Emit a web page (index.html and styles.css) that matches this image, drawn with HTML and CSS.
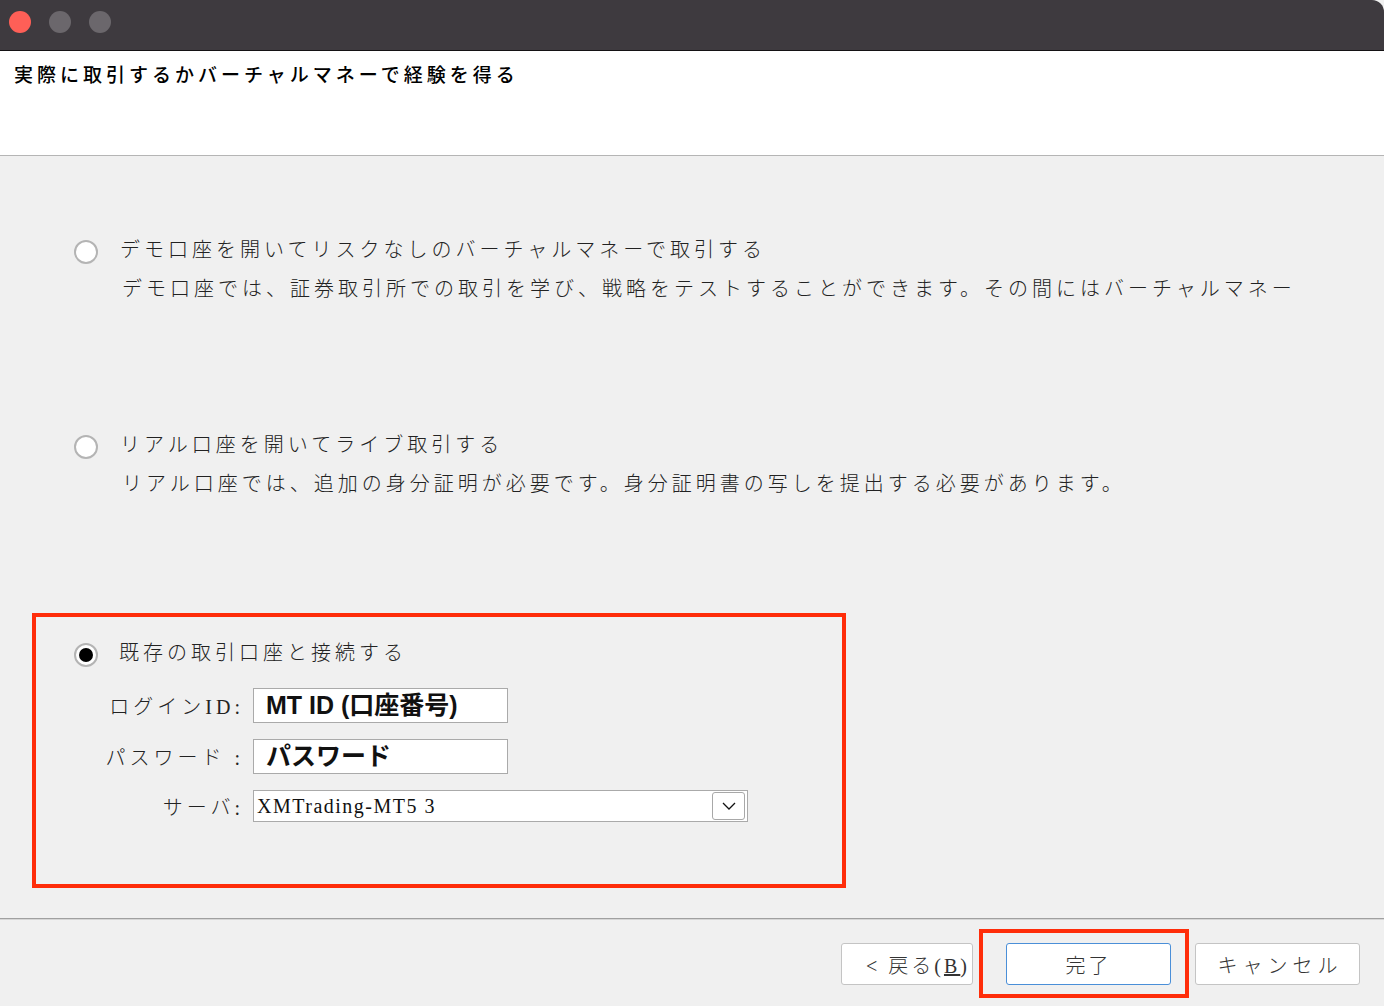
FILE: index.html
```html
<!DOCTYPE html>
<html lang="ja">
<head>
    <meta charset="UTF-8">
    <title>口座の選択</title>
    <link rel="stylesheet" href="styles.css">
</head>
<body>
<div class="window">
    <div class="titlebar">
        <span class="dot dot-close"></span>
        <span class="dot"></span>
        <span class="dot"></span>
    </div>

    <div class="header">
        <h1 class="title">実際に取引するかバーチャルマネーで経験を得る</h1>
    </div>

    <div class="main">
        <!-- demo account -->
        <div class="option">
            <span class="radio"></span>
            <div class="option-text">
                <div class="option-title">デモ口座を開いてリスクなしのバーチャルマネーで取引する</div>
                <div class="option-desc">デモ口座では、証券取引所での取引を学び、戦略をテストすることができます。その間にはバーチャルマネー</div>
            </div>
        </div>

        <!-- real account -->
        <div class="option option-real">
            <span class="radio"></span>
            <div class="option-text">
                <div class="option-title">リアル口座を開いてライブ取引する</div>
                <div class="option-desc">リアル口座では、追加の身分証明が必要です。身分証明書の写しを提出する必要があります。</div>
            </div>
        </div>

        <!-- existing account -->
        <div class="highlight-box">
            <div class="option">
                <span class="radio checked"></span>
                <div class="option-text">
                    <div class="option-title">既存の取引口座と接続する</div>
                </div>
            </div>
            <div class="login-form">
                <label class="form-label">ログインID:</label>
                <div class="text-field">MT ID (口座番号)</div>
                <label class="form-label">パスワード :</label>
                <div class="text-field">パスワード</div>
                <label class="form-label">サーバ:</label>
                <div class="select-field">
                    <span class="select-value">XMTrading-MT5 3</span>
                    <span class="select-arrow">
                        <svg width="14" height="8" viewBox="0 0 14 8"><path d="M1 1 L7 7 L13 1" fill="none" stroke="#111" stroke-width="1.3"/></svg>
                    </span>
                </div>
            </div>
        </div>
    </div>

    <div class="footer">
        <button class="btn btn-back">&lt;&nbsp;戻る(<u>B</u>)</button>
        <div class="highlight-btn">
            <button class="btn btn-done">完了</button>
        </div>
        <button class="btn btn-cancel">キャンセル</button>
    </div>
</div>
</body>
</html>
```

FILE: styles.css
```css
html {
    background-color: #fff;
}

body {
    margin: 0;
    padding: 0;
    font-family: "Liberation Serif", "Noto Sans CJK JP", serif;
    color: #222;
}

.window {
    width: 1384px;
    height: 1006px;
    background-color: #f0f0f0;
    overflow: hidden;
}

.titlebar {
    height: 51px;
    background-color: #3e3a3f;
    border-bottom: 1px solid #141214;
    border-top-right-radius: 12px;
    display: flex;
    align-items: center;
    gap: 18px;
    padding-left: 9px;
    padding-bottom: 7px;
    box-sizing: border-box;
}

.dot {
    width: 22px;
    height: 22px;
    border-radius: 50%;
    background-color: #6b676c;
}

.dot-close {
    background-color: #fe5f57;
}

.header {
    height: 105px;
    background-color: #fff;
    border-bottom: 1px solid #b5b5b5;
    padding: 8px 14px 0;
    box-sizing: border-box;
}

.title {
    margin: 0;
    font-size: 19px;
    line-height: 30px;
    font-weight: 500;
    letter-spacing: 4px;
    color: #000;
    font-family: "Noto Sans CJK JP", sans-serif;
}

.main {
    height: 762px;
    padding-top: 75px;
    box-sizing: border-box;
}

.option {
    display: flex;
    align-items: flex-start;
    padding-left: 74px;
}

.option-real {
    margin-top: 117px;
}

.radio {
    flex: 0 0 auto;
    width: 20px;
    height: 20px;
    border: 2px solid #b4b4b4;
    border-radius: 50%;
    background-color: #fff;
    margin-top: 9px;
    margin-right: 22px;
    position: relative;
}

.radio.checked::after {
    content: "";
    position: absolute;
    left: 3px;
    top: 3px;
    width: 14px;
    height: 14px;
    border-radius: 50%;
    background-color: #000;
}

.option-title,
.option-desc {
    font-size: 20px;
    line-height: 39px;
    letter-spacing: 4px;
    font-weight: 300;
    white-space: nowrap;
}

.option-desc {
    padding-left: 2px;
}

.highlight-box {
    margin: 109px 0 0 32px;
    width: 814px;
    height: 275px;
    border: 4px solid #ff2d0a;
    box-sizing: border-box;
    padding-top: 17px;
}

.highlight-box .option {
    padding-left: 38px;
}

.highlight-box .radio {
    margin-right: 21px;
}

.login-form {
    margin-top: 15px;
    display: grid;
    grid-template-columns: 204px auto;
    column-gap: 13px;
    row-gap: 16px;
    justify-items: start;
    align-items: center;
}

.form-label {
    justify-self: end;
    font-size: 20px;
    letter-spacing: 4px;
    font-weight: 300;
    margin-right: -4px;
    white-space: nowrap;
}

.text-field {
    width: 255px;
    height: 35px;
    background-color: #fff;
    border: 1px solid #aaa;
    box-sizing: border-box;
    padding-left: 12px;
    font-family: "Liberation Sans", "Noto Sans CJK JP", sans-serif;
    font-weight: bold;
    font-size: 25px;
    line-height: 33px;
    color: #111;
}

.select-field {
    width: 495px;
    height: 32px;
    background-color: #fff;
    border: 1px solid #aaa;
    box-sizing: border-box;
    display: flex;
    align-items: center;
    justify-content: space-between;
    padding: 0 2px 0 3px;
}

.select-value {
    font-size: 20px;
    letter-spacing: 1.5px;
    color: #111;
}

.select-arrow {
    width: 33px;
    height: 28px;
    border: 1px solid #a8a8a8;
    border-radius: 3px;
    box-sizing: border-box;
    display: flex;
    align-items: center;
    justify-content: center;
}

.footer {
    border-top: 1px solid #a0a0a0;
    box-shadow: inset 0 1px 0 #d6d6d6;
    display: flex;
    justify-content: flex-end;
    align-items: flex-start;
    gap: 6px;
    padding: 10px 24px 0 0;
}

.btn {
    height: 42px;
    margin-top: 14px;
    background-color: #fff;
    border: 1px solid #c4c4c4;
    border-radius: 3px;
    font-family: "Liberation Serif", "Noto Sans CJK JP", serif;
    font-size: 20px;
    font-weight: 300;
    color: #333;
    letter-spacing: 3px;
    padding: 0;
    white-space: nowrap;
}

.btn-back {
    width: 132px;
    padding-left: 22px;
    letter-spacing: 3px;
}

.btn-done {
    width: 165px;
    margin-top: 0;
    border-color: #4a8fd8;
}

.btn-cancel {
    width: 165px;
    letter-spacing: 5px;
    padding-left: 5px;
}

.highlight-btn {
    border: 4px solid #ff2d0a;
    padding: 10px 14px 9px 23px;
    margin-top: 0;
}
```
